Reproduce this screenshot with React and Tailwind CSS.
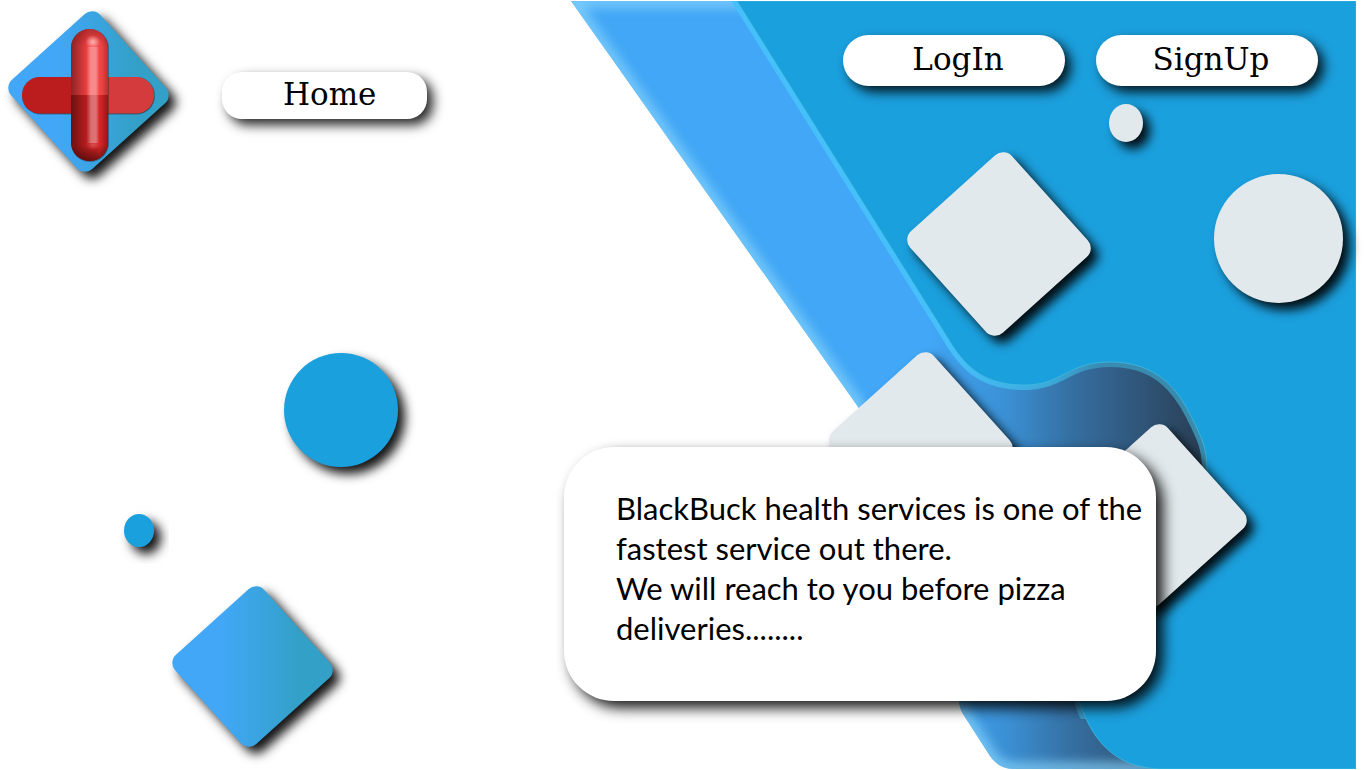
const PILL =
  "flex items-center bg-white font-['DejaVu_Serif','Liberation_Serif',serif] text-[31px] leading-9 text-black shadow-[6px_6px_12px_rgba(0,0,0,0.85)]";

function Diamond({ cx, cy, size, radius, fill }) {
  return (
    <g filter="url(#drop)">
      <rect
        x={cx - size / 2}
        y={cy - size / 2}
        width={size}
        height={size}
        rx={radius}
        fill={fill}
        transform={`rotate(48 ${cx} ${cy})`}
      />
    </g>
  );
}

function Backdrop() {
  const ribbon =
    "M571 1 H1356 V769 H1012 Q998 768 990 756 L963 714 Q958 706 958 690 L880 438 Z";
  const panel =
    "M737 1 L944 332 C962 362 978 385 1025 385 C1062 385 1068 362 1110 362 C1156 362 1177 388 1191 416 C1202 438 1207 448 1207 470 C1190 560 1060 640 1080 704 C1094 744 1118 769 1164 769 H1356 V1 Z";
  return (
    <svg
      className="absolute inset-0 h-full w-full"
      viewBox="0 0 1366 770"
      preserveAspectRatio="xMidYMin slice"
      aria-hidden="true"
    >
      <defs>
        <filter id="drop" x="-40%" y="-40%" width="190%" height="190%" colorInterpolationFilters="sRGB">
          <feDropShadow dx="7" dy="7" stdDeviation="5.5" floodColor="#000" floodOpacity="0.92" />
        </filter>
        <filter
          id="soft"
          filterUnits="userSpaceOnUse"
          x="500"
          y="-60"
          width="900"
          height="900"
          colorInterpolationFilters="sRGB"
        >
          <feGaussianBlur stdDeviation="6" />
        </filter>
        <linearGradient id="ribbonFill" gradientUnits="userSpaceOnUse" x1="930" y1="0" x2="1205" y2="0">
          <stop offset="0" stopColor="#41a7f6" />
          <stop offset="0.28" stopColor="#3b90d4" />
          <stop offset="0.5" stopColor="#3571a4" />
          <stop offset="0.7" stopColor="#315c83" />
          <stop offset="1" stopColor="#293f55" />
        </linearGradient>
        <linearGradient id="rim" gradientUnits="userSpaceOnUse" x1="950" y1="0" x2="1200" y2="0">
          <stop offset="0" stopColor="#46c0fb" />
          <stop offset="0.4" stopColor="#3ba9d9" />
          <stop offset="0.6" stopColor="#388cb3" />
          <stop offset="1" stopColor="#398bab" />
        </linearGradient>
        <linearGradient
          id="tile"
          gradientUnits="userSpaceOnUse"
          x1="172"
          y1="666.5"
          x2="333"
          y2="666.5"
          gradientTransform="rotate(-48 252.5 666.5)"
        >
          <stop offset="0.32" stopColor="#41a7f6" />
          <stop offset="0.78" stopColor="#33a0c8" />
        </linearGradient>
        <clipPath id="ribbonClip">
          <path d={ribbon} />
        </clipPath>
        <clipPath id="rimClip">
          <path d="M560 1 H1366 V719 H560 Z" />
        </clipPath>
      </defs>

      <path d={ribbon} fill="url(#ribbonFill)" />
      <g clipPath="url(#ribbonClip)">
        <path d={ribbon} fill="none" stroke="#8bd6fb" strokeOpacity="0.8" strokeWidth="12" filter="url(#soft)" />
        <g clipPath="url(#rimClip)">
          <path d={panel} fill="none" stroke="url(#rim)" strokeWidth="10" />
        </g>
        <path d={panel} fill="#1ba0de" />
        <path d={panel} fill="none" stroke="#45bde0" strokeOpacity="0.7" strokeWidth="1" />
      </g>

      <Diamond cx={999} cy={244} size={137} radius={12} fill="#e2e9ec" />
      <Diamond cx={921} cy={444} size={137} radius={12} fill="#e2e9ec" />
      <Diamond cx={1155} cy={516} size={137} radius={12} fill="#e2e9ec" />
      <Diamond cx={252.5} cy={666.5} size={120} radius={11} fill="url(#tile)" />

      <ellipse cx="1126" cy="123" rx="17" ry="19" fill="#e2e9ec" filter="url(#drop)" />
      <circle cx="1278.5" cy="238.5" r="64.5" fill="#e2e9ec" filter="url(#drop)" />
      <circle cx="341" cy="410" r="57" fill="#1ba0de" filter="url(#drop)" />
      <ellipse cx="139" cy="530.5" rx="15" ry="16.5" fill="#1ba0de" filter="url(#drop)" />
    </svg>
  );
}

function Logo() {
  return (
    <svg className="block h-[190px] w-[180px] overflow-visible" viewBox="0 0 180 190" role="img" aria-label="BlackBuck">
      <defs>
        <linearGradient
          id="logoTile"
          gradientUnits="userSpaceOnUse"
          x1="8"
          y1="91.5"
          x2="169"
          y2="91.5"
          gradientTransform="rotate(-48 88.5 91.5)"
        >
          <stop offset="0.32" stopColor="#41a7f6" />
          <stop offset="0.78" stopColor="#33a0c8" />
        </linearGradient>
        <linearGradient id="capTop">
          <stop offset="0" stopColor="#8a2425" />
          <stop offset="0.36" stopColor="#dc3a3c" />
          <stop offset="0.5" stopColor="#f24a4a" />
          <stop offset="0.82" stopColor="#f04444" />
          <stop offset="1" stopColor="#b83032" />
        </linearGradient>
        <linearGradient id="capBottom">
          <stop offset="0" stopColor="#6c1211" />
          <stop offset="0.42" stopColor="#b81c1e" />
          <stop offset="0.78" stopColor="#d82628" />
          <stop offset="1" stopColor="#961416" />
        </linearGradient>
        <linearGradient id="capShade" x1="0" y1="0" x2="0" y2="1">
          <stop offset="0" stopColor="#7a1214" stopOpacity="0.5" />
          <stop offset="0.13" stopColor="#7a1214" stopOpacity="0" />
          <stop offset="0.88" stopColor="#3d0606" stopOpacity="0" />
          <stop offset="1" stopColor="#3d0606" stopOpacity="0.7" />
        </linearGradient>
        <linearGradient id="shine">
          <stop offset="0" stopColor="#fff" stopOpacity="0.05" />
          <stop offset="0.35" stopColor="#fff" stopOpacity="0.36" />
          <stop offset="0.75" stopColor="#fff" stopOpacity="0.36" />
          <stop offset="1" stopColor="#fff" stopOpacity="0.03" />
        </linearGradient>
        <radialGradient id="glint">
          <stop offset="0" stopColor="#ffc4c4" stopOpacity="0.9" />
          <stop offset="0.5" stopColor="#ffa0a0" stopOpacity="0.6" />
          <stop offset="1" stopColor="#ff8080" stopOpacity="0" />
        </radialGradient>
        <clipPath id="capsule">
          <rect x="71" y="29" width="37" height="132" rx="18.5" />
        </clipPath>
        <clipPath id="bar">
          <rect x="22" y="77" width="132" height="36.5" rx="18" />
        </clipPath>
        <filter id="logoDrop" x="-40%" y="-40%" width="190%" height="190%" colorInterpolationFilters="sRGB">
          <feDropShadow dx="7" dy="7" stdDeviation="5.5" floodColor="#000" floodOpacity="0.92" />
        </filter>
        <filter id="edge" x="-20%" y="-20%" width="140%" height="140%" colorInterpolationFilters="sRGB">
          <feDropShadow dx="0.5" dy="0.5" stdDeviation="0.7" floodColor="#201818" floodOpacity="0.8" />
        </filter>
      </defs>
      <g filter="url(#logoDrop)">
        <rect x="28.5" y="31.5" width="120" height="120" rx="11" fill="url(#logoTile)" transform="rotate(48 88.5 91.5)" />
      </g>
      <g filter="url(#edge)">
        <g clipPath="url(#bar)">
          <rect x="22" y="77" width="67" height="37" fill="#bb1c1d" />
          <rect x="89" y="77" width="66" height="37" fill="#d43b3c" />
        </g>
      </g>
      <g filter="url(#edge)">
        <g clipPath="url(#capsule)">
          <rect x="71" y="29" width="37" height="66" fill="url(#capTop)" />
          <rect x="71" y="95" width="37" height="66" fill="url(#capBottom)" />
          <rect x="71" y="29" width="37" height="132" fill="url(#capShade)" />
          <rect x="87" y="47" width="12" height="96" fill="url(#shine)" />
          <ellipse cx="93" cy="42" rx="8" ry="7" fill="url(#glint)" />
          <ellipse cx="93" cy="145" rx="7" ry="5" fill="url(#glint)" opacity="0.3" />
        </g>
      </g>
    </svg>
  );
}

export default function App() {
  return (
    <div className="relative min-h-screen overflow-hidden bg-white text-black">
      <Backdrop />
      <div className="relative">
        <header className="flex items-start justify-between pr-12">
          <nav className="flex items-start gap-[42px]">
            <a href="#top" aria-label="BlackBuck">
              <Logo />
            </a>
            <a href="#home" className={`${PILL} mt-[72px] h-[47px] w-[205px] rounded-[20px] pl-[61px] pb-1`}>
              Home
            </a>
          </nav>
          <div className="flex gap-[31px] pt-[35px]">
            <button type="button" className={`${PILL} h-[51px] w-[222px] justify-center rounded-full pl-2 pb-1`}>
              LogIn
            </button>
            <button type="button" className={`${PILL} h-[51px] w-[222px] justify-center rounded-full pl-2 pb-1`}>
              SignUp
            </button>
          </div>
        </header>
        <main className="flex justify-end pt-[257px] pr-[210px]">
          <section className="w-[592px] rounded-[50px] bg-white pt-[41px] pr-4 pb-[53px] pl-[52px] shadow-[7px_7px_14px_rgba(0,0,0,0.9)]">
            <p className="whitespace-nowrap font-['Lato','Open_Sans',sans-serif] text-[31px] leading-10">
              BlackBuck health services is one of the
              <br />
              fastest service out there.
              <br />
              We will reach to you before pizza
              <br />
              deliveries........
            </p>
          </section>
        </main>
      </div>
    </div>
  );
}
